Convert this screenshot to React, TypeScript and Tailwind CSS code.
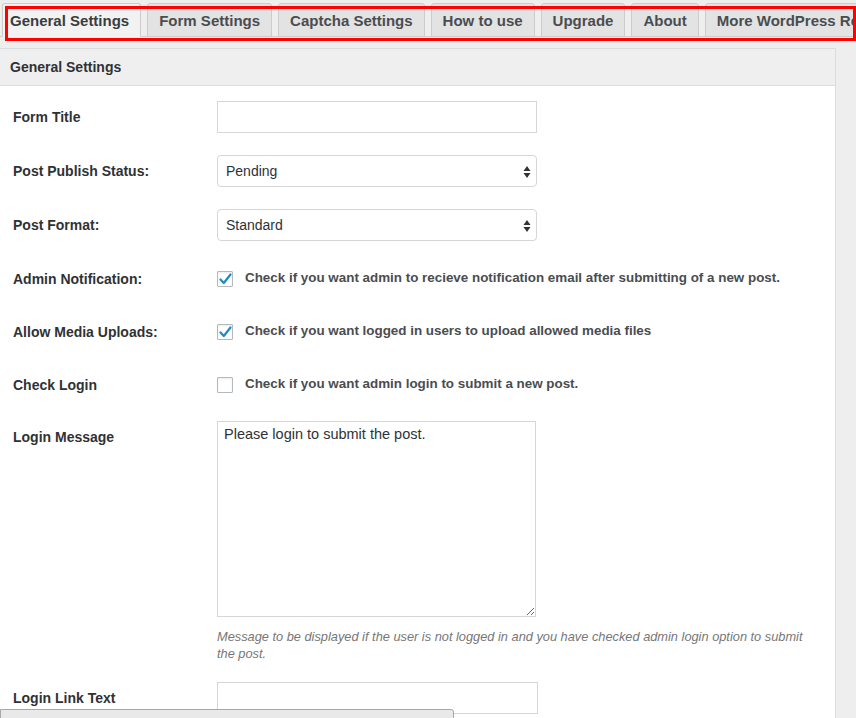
import React from 'react';

const tabs = ['General Settings', 'Form Settings', 'Captcha Settings', 'How to use', 'Upgrade', 'About', 'More WordPress Resources'];

const SelectBox: React.FC<{ value: string }> = ({ value }) => (
  <div className="relative flex h-[32px] w-[320px] items-center rounded-[4px] border border-[#d6d6d6] bg-white pl-[8px] text-[14px] text-[#2c3338]">
    {value}
    <svg className="absolute right-[5px] top-[10px]" width="8" height="12" viewBox="0 0 8 12">
      <path d="M4 0 L7.5 5 H0.5 Z" fill="#333" />
      <path d="M4 12 L7.5 7 H0.5 Z" fill="#333" />
    </svg>
  </div>
);

const CheckBox: React.FC<{ checked?: boolean }> = ({ checked }) => (
  <div className="flex h-[16px] w-[16px] shrink-0 items-center justify-center rounded-[1px] border border-[#b4b9be] bg-white shadow-[inset_0_1px_2px_rgba(0,0,0,0.08)]">
    {checked && (
      <svg width="13" height="12" viewBox="0 0 13 12">
        <path d="M1.5 6.5 L4.8 10 L11.5 1.5" fill="none" stroke="#1e8cbe" strokeWidth="2.2" strokeLinecap="round" strokeLinejoin="round" />
      </svg>
    )}
  </div>
);

const Label: React.FC<{ children: React.ReactNode }> = ({ children }) => (
  <div className="w-[217px] shrink-0 pl-[13px] pt-px text-[14px] font-bold leading-[31px] text-[#2f3235]">{children}</div>
);

const CheckRow: React.FC<{ label: string; text: string; checked?: boolean; h: string }> = ({ label, text, checked, h }) => (
  <div className={`flex items-start ${h}`}>
    <Label>{label}</Label>
    <div className="flex h-[31px] items-center gap-[12px] text-[13.4px] font-bold text-[#4a4d50]">
      <CheckBox checked={checked} />
      {text}
    </div>
  </div>
);

export default function App() {
  return (
    <div className="relative h-[718px] w-[856px] overflow-hidden bg-[#eeeeee] font-['Liberation_Sans',Arial,sans-serif]">
      {/* tab bar */}
      <div className="flex items-end border-b border-[#cfcfcf] pl-[2px] pt-[3px] whitespace-nowrap">
        {tabs.map((t, i) => (
          <div
            key={t}
            className={`-mb-px shrink-0 rounded-t-[3px] border border-[#cccccc] pt-[5px] pb-[3px] text-[15px] font-bold leading-[24px] ${
              i === 0
                ? 'ml-0 pl-[7px] pr-[11px] border-b-[#f1f1f1] bg-[#f2f2f2] text-[#3a3d40]'
                : 'ml-[6px] px-[11px] bg-[#e3e3e3] text-[#4a4d50]'
            }`}
          >
            {t}
          </div>
        ))}
      </div>

      {/* panel */}
      <div className="mt-[11px] w-[836px] border-t border-r border-[#dcdcdc]">
        <div className="flex h-[37px] items-center border-b border-[#dcdcdc] bg-[#efefef] pl-[10px] text-[14px] font-bold text-[#2f3235]">
          General Settings
        </div>
        <div className="h-[700px] bg-white pt-[15px]">
          <div className="flex h-[54px] items-start">
            <Label>Form Title</Label>
            <div className="h-[32px] w-[320px] border border-[#d6d6d6] bg-white" />
          </div>
          <div className="flex h-[54px] items-start">
            <Label>Post Publish Status:</Label>
            <SelectBox value="Pending" />
          </div>
          <div className="flex h-[54px] items-start">
            <Label>Post Format:</Label>
            <SelectBox value="Standard" />
          </div>
          <CheckRow
            h="h-[53px]"
            label="Admin Notification:"
            checked
            text="Check if you want admin to recieve notification email after submitting of a new post."
          />
          <CheckRow
            h="h-[53px]"
            label="Allow Media Uploads:"
            checked
            text="Check if you want logged in users to upload allowed media files"
          />
          <CheckRow h="h-[52px]" label="Check Login" text="Check if you want admin login to submit a new post." />
          <div className="flex items-start">
            <Label>Login Message</Label>
            <div>
              <textarea
                readOnly
                defaultValue="Please login to submit the post."
                className="block h-[196px] w-[319px] resize border border-[#d6d6d6] bg-white px-[6px] py-[3px] font-['Liberation_Sans',Arial,sans-serif] text-[14.5px] leading-[18px] text-[#2c3338] outline-none"
              />
              <p className="mt-[11px] w-[600px] text-[12.8px] italic leading-[17px] text-[#777]">
                Message to be displayed if the user is not logged in and you have checked admin login option to submit the post.
              </p>
            </div>
          </div>
          <div className="mt-[20px] flex h-[54px] items-start">
            <Label>Login Link Text</Label>
            <div className="h-[32px] w-[321px] border border-[#d6d6d6] bg-white" />
          </div>
        </div>
      </div>

      {/* red highlight drawn over the tabs */}
      <div className="pointer-events-none absolute left-[5px] top-[6px] h-[35px] w-[851px] border-[3px] border-[#ff0000]" />

      {/* floating bar at the bottom edge */}
      <div className="absolute left-0 top-[709px] h-[14px] w-[454px] rounded-tr-[3px] border border-[#a8a8a8] bg-[#e9e9e9]" />
    </div>
  );
}
